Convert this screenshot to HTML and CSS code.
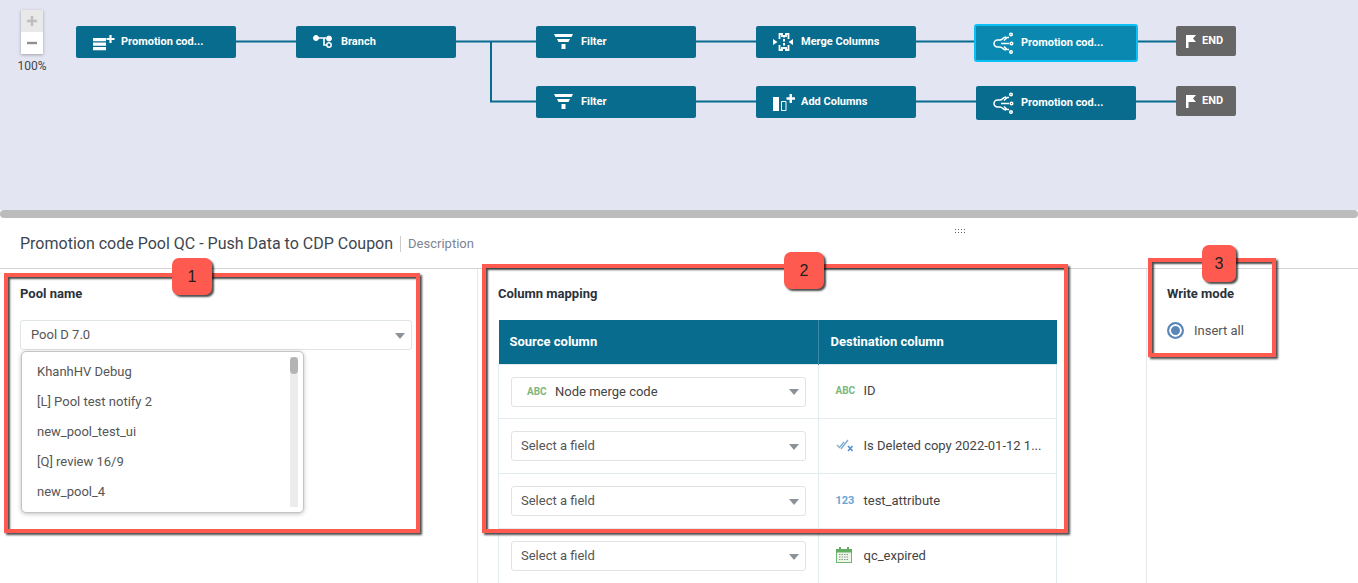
FILE: index.html
```html
<!DOCTYPE html>
<html lang="en">
<head>
    <meta charset="UTF-8">
    <meta name="viewport" content="width=device-width, initial-scale=1.0">
    <title>Promotion code Pool QC</title>
    <link rel="stylesheet" href="styles.css">
</head>
<body>
<div class="page">

    <!-- Workflow diagram -->
    <section class="canvas">
        <div class="zoom-box">
            <div class="zoom-btn zoom-plus">
                <svg width="14" height="14" viewBox="0 0 14 14"><path d="M7 2v10M2 7h10" stroke="#bdbdbd" stroke-width="2.4"/></svg>
            </div>
            <div class="zoom-btn">
                <svg width="14" height="14" viewBox="0 0 14 14"><path d="M2 7h10" stroke="#8f8f8f" stroke-width="2.4"/></svg>
            </div>
        </div>
        <div class="zoom-label">100%</div>

        <svg class="links" width="1358" height="210" viewBox="0 0 1358 210">
            <path d="M236 41.5h60M456 41.5h80M491 41.5v60h45M696 41.5h60M916 41.5h60M1136 41.5h40M696 101.5h60M916 101.5h60M1136 101.5h40" fill="none" stroke="#086c8e" stroke-width="2"/>
        </svg>

        <div class="node n1">
            <svg class="node-icon" width="22" height="18" viewBox="0 0 22 18"><path d="M0 5h13v3.300H0zM0 9.500h13v3.300H0zM0 14h13v3.300H0z" fill="#fff"/><path d="M13.500 6h8M17.500 2v8" stroke="#fff" stroke-width="2.200"/></svg>
            <span>Promotion cod...</span>
        </div>
        <div class="node n2">
            <svg class="node-icon" width="22" height="18" viewBox="0 0 22 18" fill="none" stroke="#fff"><circle cx="3" cy="5" r="2.500" fill="#fff"/><path d="M5 5h8M11 5v7h3" stroke-width="1.600"/><circle cx="16" cy="5.500" r="2.500" fill="#fff"/><circle cx="16" cy="12" r="2.200" stroke-width="1.500"/></svg>
            <span>Branch</span>
        </div>
        <div class="node n3">
            <svg class="node-icon" width="22" height="18" viewBox="0 0 22 18"><path d="M1 1h19l-1.500 3h-16zM4 6h13l-1.500 3h-10zM8.500 11h4v5h-4z" fill="#fff"/></svg>
            <span>Filter</span>
        </div>
        <div class="node n4">
            <svg class="node-icon" width="22" height="20" viewBox="0 0 22 20" fill="none" stroke="#fff" stroke-width="1.800"><path d="M9 5V2h-2.500v5M13 5V2h2.500v5M9 15v3h-2.500v-5M13 15v3h2.500v-5"/><path d="M11 3v14" stroke-width="2" stroke-dasharray="2.500 1.500"/><path d="M0 7l4.500 3-4.500 3zM20 7l-4.500 3 4.500 3z" fill="#fff" stroke="none"/></svg>
            <span>Merge Columns</span>
        </div>
        <div class="node node-active n5">
            <svg class="node-icon" width="22" height="22" viewBox="0 0 22 22" fill="none" stroke="#fff" stroke-width="1.500"><path d="M13 5C10 5 9.500 8 7 8H4.500a3.500 3.500 0 0 0 0 7H7c2.500 0 3 3 6 3M8 11.500h8M11 8.500l3-3h2M11 14.500l3 3h2"/><circle cx="18" cy="2.500" r="1.300"/><circle cx="18.500" cy="11.500" r="1.300"/><circle cx="18" cy="20" r="1.300"/></svg>
            <span>Promotion cod...</span>
        </div>
        <div class="node-end e1">
            <svg width="10" height="13" viewBox="0 0 10 13"><path d="M0 0h10L7 3.500 10 7H2.500v6H0z" fill="#fff"/></svg>
            <span>END</span>
        </div>

        <div class="node n6">
            <svg class="node-icon" width="22" height="18" viewBox="0 0 22 18"><path d="M1 1h19l-1.500 3h-16zM4 6h13l-1.500 3h-10zM8.500 11h4v5h-4z" fill="#fff"/></svg>
            <span>Filter</span>
        </div>
        <div class="node n7">
            <svg class="node-icon" width="22" height="20" viewBox="0 0 22 20"><path d="M0 5h6v14H0z" fill="#fff"/><path d="M8.500 9.500h4.500v9H8.500z" fill="none" stroke="#fff"/><path d="M13.500 6.500h8.500M17.750 2v9" stroke="#fff" stroke-width="2.400"/></svg>
            <span>Add Columns</span>
        </div>
        <div class="node n8">
            <svg class="node-icon" width="22" height="22" viewBox="0 0 22 22" fill="none" stroke="#fff" stroke-width="1.500"><path d="M13 5C10 5 9.500 8 7 8H4.500a3.500 3.500 0 0 0 0 7H7c2.500 0 3 3 6 3M8 11.500h8M11 8.500l3-3h2M11 14.500l3 3h2"/><circle cx="18" cy="2.500" r="1.300"/><circle cx="18.500" cy="11.500" r="1.300"/><circle cx="18" cy="20" r="1.300"/></svg>
            <span>Promotion cod...</span>
        </div>
        <div class="node-end e2">
            <svg width="10" height="13" viewBox="0 0 10 13"><path d="M0 0h10L7 3.500 10 7H2.500v6H0z" fill="#fff"/></svg>
            <span>END</span>
        </div>
    </section>

    <div class="split-bar"></div>

    <header class="title-row">
        <h1>Promotion code Pool QC - Push Data to CDP Coupon</h1>
        <span class="desc">Description</span>
        <div class="grip"></div>
    </header>

    <main class="panels">
        <section class="panel panel-pool">
            <div class="field-label">Pool name</div>
            <div class="select select-pool">
                <span>Pool D 7.0</span>
                <i class="caret"></i>
            </div>
            <div class="dropdown">
                <ul>
                    <li>KhanhHV Debug</li>
                    <li>[L] Pool test notify 2</li>
                    <li>new_pool_test_ui</li>
                    <li>[Q] review 16/9</li>
                    <li>new_pool_4</li>
                </ul>
                <div class="scroll-track"><div class="scroll-thumb"></div></div>
            </div>
        </section>

        <section class="panel panel-mapping">
            <div class="field-label">Column mapping</div>
            <table class="map-table">
                <thead>
                    <tr>
                        <th class="col-src">Source column</th>
                        <th>Destination column</th>
                    </tr>
                </thead>
                <tbody>
                    <tr>
                        <td>
                            <div class="select">
                                <span class="select-typed"><b class="type-abc">ABC</b>Node merge code</span>
                                <i class="caret"></i>
                            </div>
                        </td>
                        <td><div class="dest"><b class="type-abc">ABC</b><span>ID</span></div></td>
                    </tr>
                    <tr>
                        <td>
                            <div class="select"><span>Select a field</span><i class="caret"></i></div>
                        </td>
                        <td>
                            <div class="dest">
                                <span class="type-icon">
                                    <svg width="18" height="14" viewBox="0 0 18 14" fill="none" stroke="#7ba9d8" stroke-width="1.300"><path d="M1 7l2.500 2.500L8 4M5 11l7-9"/><path d="M12 8l4.500 5M16.500 8L12 13" stroke="#4f8fd0" stroke-width="1.500"/></svg>
                                </span>
                                <span>Is Deleted copy 2022-01-12 1...</span>
                            </div>
                        </td>
                    </tr>
                    <tr>
                        <td>
                            <div class="select"><span>Select a field</span><i class="caret"></i></div>
                        </td>
                        <td><div class="dest"><b class="type-num">123</b><span>test_attribute</span></div></td>
                    </tr>
                    <tr>
                        <td>
                            <div class="select"><span>Select a field</span><i class="caret"></i></div>
                        </td>
                        <td>
                            <div class="dest">
                                <span class="type-icon">
                                    <svg width="16" height="16" viewBox="0 0 16 16"><rect x=".5" y="2.500" width="15" height="13" fill="#eef6ea" stroke="#6fb56f"/><path d="M0 2h16v3.500H0zM3 0h2v3H3zM11 0h2v3h-2z" fill="#63ad63"/><path d="M3 7.500h10M3 10h10M3 12.500h10" stroke="#8a9a8a" stroke-dasharray="1.500 1"/></svg>
                                </span>
                                <span>qc_expired</span>
                            </div>
                        </td>
                    </tr>
                </tbody>
            </table>
        </section>

        <section class="panel panel-write">
            <div class="field-label">Write mode</div>
            <label class="radio-row">
                <span class="radio"></span>
                <span>Insert all</span>
            </label>
        </section>
    </main>

    <!-- Red annotations drawn over the screenshot -->
    <div class="mark mark-1"></div>
    <div class="mark mark-2"></div>
    <div class="mark mark-3"></div>
    <div class="badge badge-1">1</div>
    <div class="badge badge-2">2</div>
    <div class="badge badge-3">3</div>
</div>
</body>
</html>
```

FILE: styles.css
```css
html, body {
    margin: 0;
    padding: 0;
}
body {
    font-family: Roboto, "Liberation Sans", sans-serif;
    font-size: 13px;
    color: #444;
    background-color: #fff;
}
.page {
    position: relative;
    display: flex;
    flex-direction: column;
    width: 1358px;
    height: 583px;
    overflow: hidden;
}

/* diagram */
.canvas {
    position: relative;
    flex: none;
    height: 210px;
    background-color: #e3e5f2;
}
.links {
    position: absolute;
    left: 0;
    top: 0;
}
.zoom-box {
    position: absolute;
    left: 21px;
    top: 10px;
    width: 22px;
    box-shadow: 0 1px 3px rgba(0, 0, 0, 0.3);
}
.zoom-btn {
    display: flex;
    align-items: center;
    justify-content: center;
    height: 22px;
    background-color: #fff;
}
.zoom-plus {
    background-color: #e9e9ea;
}
.zoom-label {
    position: absolute;
    left: 12px;
    top: 59px;
    width: 40px;
    text-align: center;
    font-size: 12px;
    color: #444;
}
.node {
    position: absolute;
    box-sizing: border-box;
    display: flex;
    align-items: center;
    width: 160px;
    height: 32px;
    padding-left: 17px;
    border-radius: 2px;
    background-color: #086c8e;
    color: #fff;
    font-size: 11px;
    font-weight: 700;
}
.node span {
    padding-bottom: 2px;
}
.node-icon {
    flex: none;
    width: 22px;
    margin-right: 6px;
}
.node-active {
    width: 164px;
    height: 38px;
    padding-left: 17px;
    border: 2px solid #0cc0f5;
    border-radius: 3px;
    background-color: #0a88b0;
}
.n1 { left: 76px; top: 26px; }
.n2 { left: 296px; top: 26px; }
.n3 { left: 536px; top: 26px; }
.n4 { left: 756px; top: 26px; }
.n5 { left: 974px; top: 24px; }
.n6 { left: 536px; top: 86px; }
.n7 { left: 756px; top: 86px; }
.n8 { left: 976px; top: 86px; height: 34px; }
.node-end {
    position: absolute;
    left: 1176px;
    display: flex;
    align-items: center;
    gap: 6px;
    box-sizing: border-box;
    width: 60px;
    height: 30px;
    padding-left: 10px;
    border-radius: 2px;
    background-color: #666;
    color: #fff;
    font-size: 11px;
    font-weight: 700;
}
.node-end span {
    padding-bottom: 2px;
}
.e1 { top: 26px; }
.e2 { top: 86px; }

.split-bar {
    flex: none;
    height: 8px;
    border-radius: 4px;
    background-color: #bcbcbc;
}

/* title */
.title-row {
    position: relative;
    flex: none;
    display: flex;
    align-items: center;
    box-sizing: border-box;
    height: 51px;
    padding: 0 20px 0;
    border-bottom: 1px solid #d4d4d4;
}
.title-row h1 {
    margin: 2px 0 0;
    padding-right: 7px;
    border-right: 1px solid #ccc;
    font-size: 16px;
    font-weight: 400;
    line-height: 16px;
    color: #3d4650;
}
.desc {
    margin-left: 7px;
    color: #7d8590;
    font-size: 13px;
}
.grip {
    position: absolute;
    left: 954px;
    top: 10px;
    width: 12px;
    height: 6px;
    background-image: radial-gradient(circle, #666 0.8px, transparent 1px);
    background-size: 3px 3px;
}

/* panels */
.panels {
    flex: 1;
    display: grid;
    grid-template-columns: 478px 669px 1fr;
    min-height: 0;
}
.panel {
    position: relative;
    padding: 17px 20px 0;
    border-right: 1px solid #e4e8ea;
}
.panel-mapping {
    padding-right: 89px;
}
.panel-write {
    border-right: none;
}
.field-label {
    height: 16px;
    line-height: 16px;
    font-size: 13px;
    font-weight: 700;
    color: #2b323a;
}
.select {
    display: flex;
    align-items: center;
    justify-content: space-between;
    box-sizing: border-box;
    height: 30px;
    padding: 0 6px 1px 10px;
    border: 1px solid #dfe4e6;
    border-radius: 3px;
    background-color: #fff;
    color: #555;
}
.select-pool {
    width: 392px;
    margin-top: 18px;
}
.select-typed {
    display: flex;
    align-items: center;
    padding-left: 6px;
    color: #444;
}
.select-typed .type-abc {
    width: 28px;
}
.caret {
    flex: none;
    width: 0;
    height: 0;
    margin-top: 2px;
    border-left: 5.5px solid transparent;
    border-right: 5.5px solid transparent;
    border-top: 6px solid #8b929a;
}
.dropdown {
    position: absolute;
    left: 21px;
    top: 82px;
    box-sizing: border-box;
    display: flex;
    justify-content: space-between;
    width: 283px;
    height: 162px;
    padding: 5px 5px 5px 0;
    border: 1px solid #c4c4c4;
    border-radius: 5px;
    background-color: #fff;
    box-shadow: 0 1px 4px rgba(0, 0, 0, 0.25);
}
.dropdown ul {
    margin: 0;
    padding: 0;
    list-style: none;
}
.dropdown li {
    height: 30px;
    line-height: 30px;
    padding-left: 15px;
    color: #555;
}
.scroll-track {
    width: 8px;
    height: 150px;
    background-color: #ececec;
}
.scroll-thumb {
    width: 8px;
    height: 17px;
    border-radius: 4px;
    background-color: #b4b4b4;
}

/* mapping table */
.map-table {
    width: 559px;
    margin-top: 18px;
    table-layout: fixed;
    border-collapse: collapse;
}
.map-table th {
    height: 42px;
    padding: 0 0 2px 12px;
    text-align: left;
    background-color: #086c8e;
    color: #fff;
    font-size: 13px;
    font-weight: 700;
}
.map-table .col-src {
    width: 308px;
    padding-left: 11px;
    border-right: 1px solid #3b8aa5;
}
.map-table td {
    height: 54px;
    padding: 0 12px;
    border: 1px solid #e2ecef;
}
.map-table .select {
    padding-left: 9px;
}
.map-table tbody tr:first-child td {
    height: 53px;
}
.dest {
    display: flex;
    align-items: center;
    padding: 0 0 2px 5px;
    color: #444;
}
.dest b, .type-icon {
    flex: none;
    width: 28px;
}
.type-icon {
    display: flex;
    align-items: center;
}
.type-abc {
    font-size: 10px;
    font-weight: 700;
    color: #7cb77c;
}
.type-num {
    font-size: 11px;
    font-weight: 700;
    color: #6aa5d8;
}

/* write mode */
.radio-row {
    display: flex;
    align-items: center;
    gap: 10px;
    margin-top: 20px;
    color: #555;
}
.radio {
    box-sizing: border-box;
    flex: none;
    width: 17px;
    height: 17px;
    border: 2px solid #5b87b8;
    border-radius: 50%;
    background-color: #5b87b8;
    box-shadow: inset 0 0 0 2px #fff;
}

/* annotations */
.mark {
    position: absolute;
    box-sizing: border-box;
    border: 4px solid #ff5a4f;
    box-shadow: 2px 2px 2px rgba(0, 0, 0, 0.7), inset 2px 2px 2px rgba(0, 0, 0, 0.7);
}
.mark-1 { left: 4px; top: 273px; width: 416px; height: 260px; }
.mark-2 { left: 482px; top: 264px; width: 586px; height: 269px; }
.mark-3 { left: 1148px; top: 258px; width: 128px; height: 99px; }
.badge {
    position: absolute;
    display: flex;
    align-items: center;
    justify-content: center;
    width: 40px;
    height: 37px;
    border-radius: 7px;
    background-color: #ff5a4f;
    box-shadow: 2px 2px 2px rgba(0, 0, 0, 0.7);
    color: #222;
    font-family: "Liberation Sans", sans-serif;
    font-size: 16px;
}
.badge-1 { left: 172px; top: 258px; }
.badge-2 { left: 784px; top: 252px; }
.badge-3 { left: 1202px; top: 245px; width: 34px; }
```
